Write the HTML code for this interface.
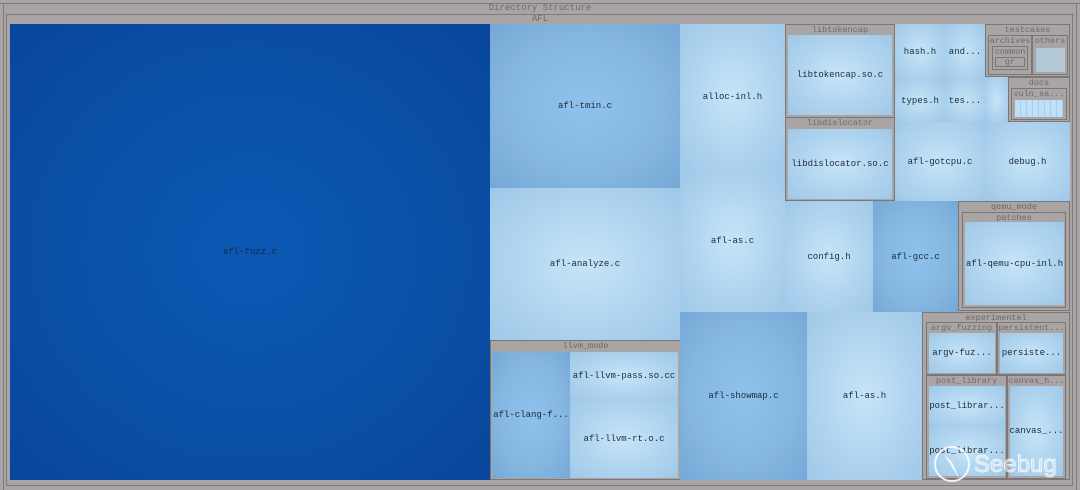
<!DOCTYPE html>
<html><head><meta charset="utf-8"><style>
*{margin:0;padding:0;box-sizing:border-box}
body{width:1080px;height:490px;background:#aaa5a5;position:relative;overflow:hidden;font-family:"Liberation Mono","DejaVu Sans Mono",monospace;font-size:9px;color:#1a2a3a}
.a{position:absolute}
.c{position:absolute;display:flex;align-items:center;justify-content:center;background:radial-gradient(ellipse at center,#c6e4f7 0%,#aed3ef 60%,#9fc8e7 100%);white-space:nowrap;overflow:hidden}
.d{background:radial-gradient(ellipse at center,#8ec2ec 0%,#84b6e0 60%,#76a8d6 100%)}
.g{position:absolute;border:1px solid #7c7676;background:#aaa5a5}
.h{position:absolute;left:0;right:0;top:0;height:11px;line-height:11px;text-align:center;color:#6e6868;font-size:8.5px;white-space:nowrap;overflow:hidden}
.l{position:absolute;background:#807a7a}
</style></head><body>
<div class="l" style="left:0;top:3px;width:1080px;height:1px"></div>
<div class="l" style="left:3px;top:3px;width:1px;height:487px"></div>
<div class="l" style="left:1076px;top:3px;width:1px;height:487px"></div>
<div class="a" style="left:0;top:3px;width:1080px;text-align:center;color:#6e6868;font-size:9px;line-height:11px">Directory Structure</div>
<div class="l" style="left:6px;top:14px;width:1068px;height:1px"></div>
<div class="l" style="left:6px;top:14px;width:1px;height:472px"></div>
<div class="l" style="left:1072px;top:14px;width:1px;height:472px"></div>
<div class="l" style="left:6px;top:485px;width:1067px;height:1px"></div>
<div class="a" style="left:0;top:14px;width:1080px;text-align:center;color:#6e6868;font-size:9px;line-height:10px">AFL</div>

<div class="c" style="left:10px;top:24px;width:480px;height:456px;background:radial-gradient(ellipse at center,#0b58b4 0%,#0a4fa6 60%,#08469a 100%)">afl-fuzz.c</div>
<div class="c d" style="left:490px;top:24px;width:190px;height:164px">afl-tmin.c</div>
<div class="c" style="left:490px;top:188px;width:190px;height:152px">afl-analyze.c</div>
<div class="g" style="left:490px;top:340px;width:191px;height:140px"><div class="h">llvm_mode</div></div>
<div class="c d" style="left:492px;top:352px;width:78px;height:126px">afl-clang-f...</div>
<div class="c" style="left:570px;top:352px;width:108px;height:48px">afl-llvm-pass.so.cc</div>
<div class="c" style="left:570px;top:400px;width:108px;height:78px">afl-llvm-rt.o.c</div>
<div class="c" style="left:680px;top:24px;width:105px;height:146px">alloc-inl.h</div>
<div class="c" style="left:680px;top:170px;width:105px;height:142px">afl-as.c</div>
<div class="c d" style="left:680px;top:312px;width:127px;height:168px">afl-showmap.c</div>
<div class="c" style="left:807px;top:312px;width:115px;height:168px">afl-as.h</div>

<div class="g" style="left:785px;top:24px;width:110px;height:94px"><div class="h">libtokencap</div></div>
<div class="c" style="left:788px;top:35px;width:104px;height:80px">libtokencap.so.c</div>
<div class="g" style="left:785px;top:117px;width:110px;height:84px"><div class="h">libdislocator</div></div>
<div class="c" style="left:788px;top:129px;width:104px;height:70px">libdislocator.so.c</div>

<div class="c" style="left:895px;top:24px;width:50px;height:56px">hash.h</div>
<div class="c" style="left:945px;top:24px;width:40px;height:56px">and...</div>
<div class="c" style="left:895px;top:80px;width:50px;height:42px">types.h</div>
<div class="c" style="left:945px;top:80px;width:40px;height:42px">tes...</div>
<div class="c" style="left:985px;top:77px;width:23px;height:45px"></div>
<div class="g" style="left:985px;top:24px;width:85px;height:53px"><div class="h">testcases</div>
 <div class="g" style="left:2px;top:10px;width:44px;height:40px"><div class="h">archives</div>
  <div class="g" style="left:3px;top:10px;width:36px;height:24px"><div class="h" style="height:10px;line-height:10px">common</div>
   <div class="g" style="left:2px;top:10px;width:30px;height:10px"><div class="h" style="height:9px;line-height:9px">gr</div></div></div></div>
 <div class="g" style="left:46px;top:10px;width:36px;height:40px"><div class="h">others</div>
  <div class="c" style="left:3px;top:12px;width:22px;height:24px;background:#b0c8d8"></div>
  <div class="c" style="left:25px;top:12px;width:7px;height:24px;background:#b8c8d4"></div></div>
</div>
<div class="g" style="left:1008px;top:77px;width:62px;height:45px"><div class="h">docs</div>
 <div class="g" style="left:2px;top:10px;width:56px;height:32px"><div class="h">vuln_sa...</div>
  <div class="c" style="left:3px;top:11px;width:48px;height:17px;background:repeating-linear-gradient(90deg,#bfe0f6 0 5px,#a6cde9 5px 6px)"></div></div>
</div>
<div class="c" style="left:895px;top:122px;width:90px;height:79px">afl-gotcpu.c</div>
<div class="c" style="left:985px;top:122px;width:85px;height:79px">debug.h</div>

<div class="c" style="left:785px;top:201px;width:88px;height:111px">config.h</div>
<div class="c d" style="left:873px;top:201px;width:85px;height:111px">afl-gcc.c</div>
<div class="g" style="left:958px;top:201px;width:112px;height:110px"><div class="h">qemu_mode</div>
 <div class="g" style="left:3px;top:10px;width:104px;height:96px"><div class="h">patches</div></div></div>
<div class="c" style="left:965px;top:222px;width:99px;height:83px">afl-qemu-cpu-inl.h</div>

<div class="g" style="left:922px;top:312px;width:148px;height:168px"><div class="h">experimental</div></div>
<div class="g" style="left:926px;top:322px;width:71px;height:53px"><div class="h">argv_fuzzing</div></div>
<div class="c" style="left:929px;top:333px;width:66px;height:40px">argv-fuz...</div>
<div class="g" style="left:997px;top:322px;width:69px;height:53px"><div class="h">persistent...</div></div>
<div class="c" style="left:1000px;top:333px;width:63px;height:40px">persiste...</div>
<div class="g" style="left:926px;top:375px;width:81px;height:104px"><div class="h">post_library</div></div>
<div class="c" style="left:929px;top:386px;width:76px;height:40px">post_librar...</div>
<div class="c" style="left:929px;top:426px;width:76px;height:50px">post_librar...</div>
<div class="g" style="left:1007px;top:375px;width:59px;height:104px"><div class="h">canvas_h...</div></div>
<div class="c" style="left:1010px;top:386px;width:53px;height:90px">canvas_...</div>

<svg class="a" style="left:930px;top:440px" width="140" height="50" viewBox="0 0 140 50">
<circle cx="22" cy="24" r="17" fill="none" stroke="#fff" stroke-width="2" opacity="0.85"/>
<path d="M14 14 L30 40 L22 22 Z" fill="#fff" opacity="0.85"/>
<text x="44" y="32" font-family="Liberation Sans,sans-serif" font-size="24" fill="#fff" fill-opacity="0.35" stroke="#fff" stroke-width="0.8" opacity="0.9">Seebug</text>
</svg>
</body></html>
